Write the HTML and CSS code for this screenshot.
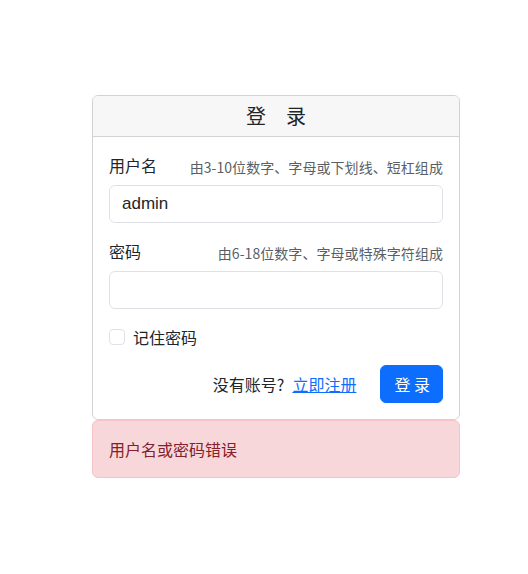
FILE: index.html
```html
<!DOCTYPE html>
<html lang="zh">
<head>
<meta charset="utf-8">
<title>登录</title>
<link rel="stylesheet" href="styles.css">
</head>
<body>
<div class="wrap">
  <div class="card">
    <div class="card-header">登　录</div>
    <div class="card-body">
      <div class="field">
        <div class="label-row">
          <span class="label">用户名</span>
          <span class="hint">由3-10位数字、字母或下划线、短杠组成</span>
        </div>
        <div class="input">admin</div>
      </div>
      <div class="field">
        <div class="label-row">
          <span class="label">密码</span>
          <span class="hint">由6-18位数字、字母或特殊字符组成</span>
        </div>
        <div class="input"></div>
      </div>
      <div class="check-row">
        <span class="checkbox"></span>
        <span class="check-label">记住密码</span>
      </div>
      <div class="action-row">
        <span class="reg"><span class="q">没有账号?</span><a class="link" href="#">立即注册</a></span>
        <button class="btn">登 录</button>
      </div>
    </div>
  </div>
  <div class="alert">用户名或密码错误</div>
</div>
</body>
</html>
```

FILE: styles.css
```css
* { box-sizing: border-box; }
html, body { margin: 0; padding: 0; background: #fff; }
body {
  font-family: "Noto Sans CJK SC", "Noto Sans", sans-serif;
  font-size: 16px;
  line-height: 24px;
  color: #212529;
}
.wrap {
  width: 368px;
  margin: 95px 0 0 92px;
}
.card {
  border: 1px solid #d3d3d3;
  border-radius: 6px;
  background: #fff;
  overflow: hidden;
}
.card-header {
  background: #f7f7f7;
  border-bottom: 1px solid #d3d3d3;
  text-align: center;
  font-size: 20px;
  line-height: 24px;
  padding: 8px 16px;
  height: 41px;
  color: #212529;
}
.card-body {
  padding: 16px;
  display: flex;
  flex-direction: column;
  gap: 16px;
}
.field { display: flex; flex-direction: column; gap: 8px; }
.label-row {
  display: flex;
  justify-content: space-between;
  align-items: baseline;
  height: 24px;
}
.label { font-size: 16px; }
.hint { font-size: 14px; color: #5a5f66; position: relative; top: 1px; letter-spacing: 0.06px; }
.input {
  height: 38px;
  border: 1px solid #dee2e6;
  border-radius: 6px;
  padding: 6px 12px;
  font-family: "Liberation Sans", "Noto Sans", sans-serif;
  font-size: 17px;
  line-height: 24px;
  color: #212529;
}
.check-row { display: flex; align-items: center; height: 24px; gap: 8px; }
.checkbox {
  width: 16px;
  height: 16px;
  border: 1px solid #dee2e6;
  border-radius: 4px;
  background: #fff;
}
.action-row {
  display: flex;
  justify-content: flex-end;
  align-items: center;
  gap: 24px;
}
.reg { font-size: 16px; }
.q { margin-right: 8px; }
.link { color: #0d6efd; text-decoration: underline; }
.btn {
  height: 38px;
  background: #0d6efd;
  color: #fff;
  border: 1px solid #0d6efd;
  border-radius: 6px;
  padding: 6px 12px 6px 13px;
  font-family: inherit;
  font-size: 16px;
  line-height: 24px;
  cursor: pointer;
}
.alert {
  margin-top: 0;
  background: #f8d7da;
  border: 1px solid #f5c2c7;
  color: #842029;
  border-radius: 6px;
  padding: 16px;
  line-height: 24px;
}
```
